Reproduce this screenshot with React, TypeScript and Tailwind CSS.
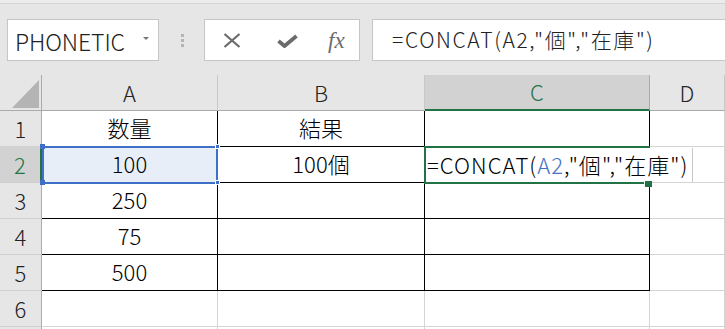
import React from "react";

const JP = "font-['Noto_Sans_CJK_JP','Noto_Sans_CJK_SC',sans-serif] font-light";

function Corner() {
  return (
    <div className="relative bg-[#e6e6e6] border-r border-b border-r-[#ababab] border-b-[#ababab]">
      <svg className="absolute left-[12px] top-[5px]" width="28" height="29" viewBox="0 0 28 29">
        <polygon points="27,0 27,28 0,28" fill="#b4b4b4" />
      </svg>
    </div>
  );
}

function ColHeader({ label, selected }: { label: string; selected?: boolean }) {
  return (
    <div
      className={
        selected
          ? "flex items-center justify-center pb-[2px] bg-[#d2d2d2] border-r border-r-[#ababab] border-b-2 border-b-[#217346] text-[#217346] text-[22px] leading-none"
          : "flex items-center justify-center pb-[2px] bg-[#e6e6e6] border-r border-r-[#c8c8c8] border-b border-b-[#ababab] text-[#222] text-[22px] leading-none"
      }
    >
      {label}
    </div>
  );
}

function RowHeader({ label, selected }: { label: string; selected?: boolean }) {
  return (
    <div
      className={
        selected
          ? "flex items-center justify-center pb-[2px] bg-[#d2d2d2] border-r-2 border-r-[#217346] border-b border-b-[#d0d0d0] text-[#217346] text-[22px] leading-none"
          : "flex items-center justify-center pb-[2px] bg-[#e6e6e6] border-r border-r-[#ababab] border-b border-b-[#d0d0d0] text-[#222] text-[22px] leading-none"
      }
    >
      {label}
    </div>
  );
}

function Cell({ text, table }: { text?: string; table?: boolean }) {
  return (
    <div
      className={
        table
          ? "flex items-center justify-center pb-[3px] bg-white border-r border-b border-black text-black text-[22px] leading-none"
          : "flex items-center justify-center pb-[3px] bg-white border-r border-b border-[#d4d4d4] text-black text-[22px] leading-none"
      }
    >
      {text}
    </div>
  );
}

function Formula({ blue }: { blue?: boolean }) {
  return (
    <span className="whitespace-nowrap">
      =CONCAT(<span className={blue ? "text-[#4472c4]" : ""}>A2</span>,"個","在庫")
    </span>
  );
}

export default function App() {
  const data: { a: string; b: string }[] = [
    { a: "数量", b: "結果" },
    { a: "100", b: "100個" },
    { a: "250", b: "" },
    { a: "75", b: "" },
    { a: "500", b: "" },
  ];

  return (
    <div className={`w-[725px] h-[329px] overflow-hidden bg-[#e6e6e6] ${JP}`}>
      {/* toolbar */}
      <div className="h-[75px] flex flex-col">
        <div className="h-[4px] bg-[#ececec] border-b border-[#d5d5d5]" />
        <div className="flex items-start pt-[15px]">
          <div className="ml-[7px] w-[152px] h-[42px] bg-white border border-[#c6c6c6] flex items-center pl-[7px] pt-[3px]">
            <span className="text-[23px] leading-none text-[#222] tracking-[-0.1px]">PHONETIC</span>
            <svg className="ml-[18px] mt-[-5px]" width="6" height="4" viewBox="0 0 6 4">
              <polygon points="0,0 6,0 3,3" fill="#777" />
            </svg>
          </div>
          <div className="w-[45px] h-[42px] flex flex-col items-center justify-center gap-[2px] pl-[1px]">
            <div className="w-[3px] h-[3px] bg-[#b5b5b5]" />
            <div className="w-[3px] h-[3px] bg-[#b5b5b5]" />
            <div className="w-[3px] h-[3px] bg-[#b5b5b5]" />
          </div>
          <div className="w-[156px] h-[42px] bg-white border border-[#c6c6c6] flex items-center">
            <svg className="ml-[18px]" width="18" height="15" viewBox="0 0 18 15">
              <path d="M1.5 1 L16.5 14 M16.5 1 L1.5 14" stroke="#6b6b6b" strokeWidth="2.2" fill="none" />
            </svg>
            <svg className="ml-[36px] mt-[2px]" width="21" height="14" viewBox="0 0 21 14">
              <path d="M1.5 7 L7.5 12 L19.5 2" stroke="#6b6b6b" strokeWidth="3.8" fill="none" strokeLinejoin="round" />
            </svg>
            <span className="ml-[30px] font-['Liberation_Serif',serif] italic font-normal text-[23px] leading-none text-[#6b6b6b]">fx</span>
          </div>
          <div className="ml-[12px] flex-1 h-[42px] bg-white border border-r-0 border-[#c6c6c6] flex items-center pl-[19px] pb-[2px] text-[21px] leading-none text-[#222] tracking-[1.65px]">
            <Formula />
          </div>
        </div>
      </div>

      {/* grid */}
      <div className="grid grid-cols-[42px_176px_207px_225px_75px] grid-rows-[36px_36px_36px_36px_36px_36px_36px_36px]">
        <Corner />
        <ColHeader label="A" />
        <ColHeader label="B" />
        <ColHeader label="C" selected />
        <ColHeader label="D" />

        {data.map((r, i) => (
          <React.Fragment key={i}>
            <RowHeader label={String(i + 1)} selected={i === 1} />
            {i === 1 ? (
              <div className="relative flex items-center justify-center pb-[3px] bg-[#e8eef8] border-r border-b border-black text-black text-[22px] leading-none">
                {r.a}
                <div className="absolute left-0 top-[-1px] w-[176px] h-[38px] border-2 border-[#3f6fc6]" />
                <div className="absolute left-[-2px] top-[-3px] w-[5px] h-[5px] bg-[#3f6fc6]" />
                <div className="absolute right-[-3px] top-[-3px] w-[5px] h-[5px] bg-[#3f6fc6] border border-white" />
                <div className="absolute left-[-2px] bottom-[-3px] w-[5px] h-[5px] bg-[#3f6fc6]" />
                <div className="absolute right-[-3px] bottom-[-3px] w-[5px] h-[5px] bg-[#3f6fc6] border border-white" />
              </div>
            ) : (
              <Cell text={r.a} table />
            )}
            <Cell text={r.b} table />
            {i === 1 ? (
              <div className="relative bg-white border-r border-b border-black z-10">
                <div className="absolute left-[-1px] top-[-1px] w-[226px] h-[38px] border-2 border-[#217346]" />
                <div className="absolute left-[1px] top-[1px] w-[267px] h-[34px] bg-white border-r border-[#c8c8c8] flex items-center pl-[1px] pb-[3px] text-[22px] leading-none text-black tracking-[1.05px]">
                  <Formula blue />
                </div>
                <div className="absolute left-[219px] top-[34px] w-[8px] h-[6px] bg-[#217346] border-l border-white" />
              </div>
            ) : (
              <Cell table />
            )}
            <Cell />
          </React.Fragment>
        ))}

        <RowHeader label="6" />
        <Cell />
        <Cell />
        <Cell />
        <Cell />
        <RowHeader label="" />
        <Cell />
        <Cell />
        <Cell />
        <Cell />
      </div>
    </div>
  );
}
